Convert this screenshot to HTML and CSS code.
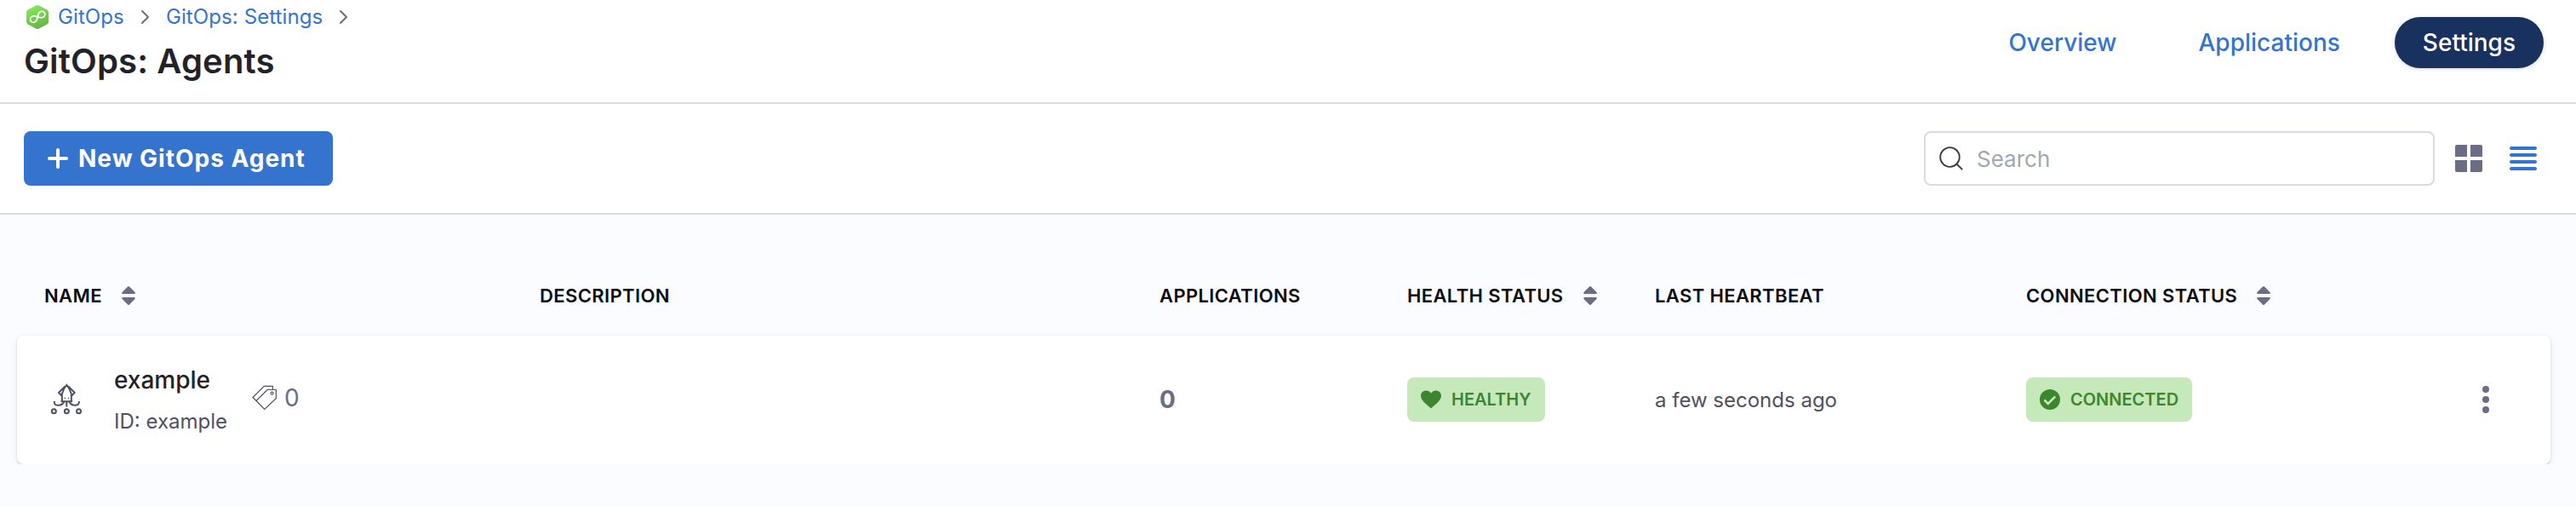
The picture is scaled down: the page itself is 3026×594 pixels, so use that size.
FILE: index.html
```html
<!DOCTYPE html>
<html lang="en">
<head>
<meta charset="utf-8">
<title>GitOps: Agents</title>
<link rel="stylesheet" href="styles.css">
</head>
<body>
<header class="header">
  <div class="heading">
    <nav class="crumbs">
      <svg class="logo" width="28" height="30" viewBox="0 0 28 30"><defs><linearGradient id="g" x1="0.3" y1="0" x2="0.7" y2="1"><stop offset="0" stop-color="#86ea55"/><stop offset="1" stop-color="#62b344"/></linearGradient></defs><path d="M12.2 1.4q1.8-1 3.6 0l9.6 5.2q1.600 1 1.600 2.700v11.400q0 1.700-1.600 2.700l-9.600 5.200q-1.800 1-3.600 0l-9.600-5.200q-1.600-1-1.600-2.700V9.300q0-1.700 1.600-2.700z" fill="url(#g)"/><path transform="translate(14.200 14.800) rotate(-30)" d="M0 0C2-2.500 3.500-3.600 5.800-3.600a3.600 3.600 0 0 1 0 7.200C3.500 3.600 2 2.500 0 0C-2-2.500-3.500-3.600-5.800-3.600a3.600 3.600 0 0 0 0 7.200C-3.500 3.600-2 2.500 0 0z" fill="none" stroke="#fff" stroke-width="1.700"/></svg>
      <a class="crumb">GitOps</a>
      <svg class="chev" width="12" height="18" viewBox="0 0 12 18"><path d="M2 2l7 7-7 7"/></svg>
      <a class="crumb">GitOps: Settings</a>
      <svg class="chev" width="12" height="18" viewBox="0 0 12 18"><path d="M2 2l7 7-7 7"/></svg>
    </nav>
    <h1 class="title">GitOps: Agents</h1>
  </div>
  <nav class="tabs">
    <a class="tab">Overview</a>
    <a class="tab">Applications</a>
    <a class="tab active">Settings</a>
  </nav>
</header>
<section class="toolbar">
  <button class="new"><svg width="24" height="24" viewBox="0 0 24 24"><path d="M12 2v20M2 12h20" stroke="#fff" stroke-width="4" stroke-linecap="round"/></svg><span>New GitOps Agent</span></button>
  <div class="tools">
    <div class="search"><svg width="28" height="28" viewBox="0 0 28 28"><circle cx="12.500" cy="12.500" r="11.300"/><path d="M20.500 20.500l6.200 6.200"/></svg><span>Search</span></div>
    <svg class="gridicon" width="32" height="32" viewBox="0 0 32 32" fill="#6b6d85"><path d="M2 0h12v14H0V2q0-2 2-2zM18 0h12q2 0 2 2v12H18zM0 18h14v14H2q-2 0-2-2zM18 18h14v12q0 2-2 2H18z"/></svg>
    <svg width="32" height="28" viewBox="0 0 32 28" stroke="#3474ce" stroke-width="4" stroke-linecap="round"><path d="M2 2h28M2 10h28M2 18h28M2 26h28"/></svg>
  </div>
</section>
<main class="content">
  <div class="cols head">
    <div>NAME<svg class="sort" width="16" height="22" viewBox="0 0 16 22"><path d="M7 .5q1-1 2 0l6.500 6.600q.9 1.900-1 1.900h-13q-1.900 0-1-1.900zM7 21.500q1 1 2 0l6.500-6.600q.9-1.900-1-1.900h-13q-1.900 0-1 1.900z"/></svg></div>
    <div>DESCRIPTION</div>
    <div>APPLICATIONS</div>
    <div>HEALTH STATUS<svg class="sort" width="16" height="22" viewBox="0 0 16 22"><path d="M7 .5q1-1 2 0l6.500 6.600q.9 1.900-1 1.900h-13q-1.900 0-1-1.900zM7 21.500q1 1 2 0l6.500-6.600q.9-1.900-1-1.900h-13q-1.900 0-1 1.900z"/></svg></div>
    <div>LAST HEARTBEAT</div>
    <div>CONNECTION STATUS<svg class="sort" width="16" height="22" viewBox="0 0 16 22"><path d="M7 .5q1-1 2 0l6.500 6.600q.9 1.900-1 1.900h-13q-1.900 0-1-1.900zM7 21.500q1 1 2 0l6.500-6.600q.9-1.900-1-1.900h-13q-1.900 0-1 1.900z"/></svg></div>
    <div></div>
  </div>
  <div class="cols row">
    <div class="name">
      <svg class="squid" width="38" height="38" viewBox="0 0 38 38" fill="none" stroke="#4f5162" stroke-width="2"><path d="M13.800 21.300V12.500Q15.500 6 19.300 1.800q3.800 4.200 5.500 10.700v8.800zM12.500 21.300h13.600M17.500 3.500L10 10.800l3.800 4.200M21.100 3.500l7.500 7.300-3.800 4.200M4.800 21v1.500c.4 4 8.400 5.300 11.500-1M33.800 21v1.500c-.4 4-8.400 5.300-11.500-1M19.300 22v5.500"/><circle cx="4.300" cy="32.700" r="2.500"/><circle cx="19.300" cy="32.700" r="2.500"/><circle cx="33.500" cy="32.700" r="2.500"/><path d="M16.500 17.500h1.300M20.800 17.500h1.300" stroke-width="1.500"/></svg>
      <div class="ident"><div class="agent">example</div><div class="id">ID: example</div></div>
      <div class="tags"><svg width="30" height="30" viewBox="0 0 30 30" fill="none" stroke="#4f5162" stroke-width="1.200"><path d="M5 18.500L18 5.500h10.300v10.300L14.700 28.500zM5 18.500L1 14.500 14.200 1.400H24.300v4"/><circle cx="23.500" cy="9.700" r="1.500"/></svg><span>0</span></div>
    </div>
    <div></div>
    <div class="count">0</div>
    <div><span class="badge healthy"><svg width="24" height="22" viewBox="0 0 24 22"><path d="M12 21.500C8.500 18 0 12.500 0 6.500 0 .2 8.800-1.800 12 3.800 15.200-1.800 24 .2 24 6.500c0 6-8.500 11.500-12 15z"/></svg>HEALTHY</span></div>
    <div class="beat">a few seconds ago</div>
    <div><span class="badge connected"><svg width="24" height="24" viewBox="0 0 24 24"><circle cx="12" cy="12" r="12"/><path d="M5.500 12.500l4.300 4.300 8.500-8.500" fill="none" stroke="#c6e9bb" stroke-width="2.600"/></svg>CONNECTED</span></div>
    <div class="more"><svg width="8" height="32" viewBox="0 0 8 32" fill="#6b6d85"><circle cx="4" cy="4" r="4"/><circle cx="4" cy="16" r="4"/><circle cx="4" cy="28" r="4"/></svg></div>
  </div>
</main>
</body>
</html>
```
FILE: styles.css
```css
* { box-sizing: border-box; }
body { margin: 0; background: #fbfcff; font-family: Inter, sans-serif; color: #22222a; }
svg { display: block; flex: none; }
.header { height: 122px; background: #fff; border-bottom: 2px solid #d9dae5; display: flex; justify-content: space-between; padding: 0 38px 0 28px; }
.crumbs { display: flex; align-items: center; height: 40px; padding-left: 2px; font-size: 24px; line-height: 40px; color: #3474ce; letter-spacing: .1px; }
.logo { margin-right: 10px; }
.chev { margin: 0 18px 0 19px; fill: none; stroke: #6b6d85; stroke-width: 2; stroke-linecap: round; stroke-linejoin: round; }
.title { margin: 8px 0 0; font-size: 40px; line-height: 48px; font-weight: 600; letter-spacing: .15px; }
.tabs { display: flex; align-items: center; height: 60px; margin-top: 20px; gap: 32px; font-size: 28px; font-weight: 500; color: #3474ce; }
.tab { line-height: 60px; padding: 0 32px; border-radius: 30px; }
.tab.active { padding: 0 33px; background: #18315f; color: #fff; box-shadow: 0 1px 4px rgba(40,41,61,.2); }
.toolbar { height: 130px; background: #fff; border-bottom: 2px solid #d9dae5; display: flex; justify-content: space-between; align-items: center; padding: 0 46px 0 28px; }
.new { display: flex; align-items: center; width: 363px; height: 64px; border: 0; border-radius: 8px; background: #3474ce; color: #fff; padding: 0 0 0 28px; gap: 12px; font: 700 28px/64px Inter, sans-serif; letter-spacing: 1px; white-space: nowrap; }
.tools { display: flex; align-items: center; }
.search { width: 600px; height: 64px; border: 2px solid #d9dae5; border-radius: 8px; display: flex; align-items: center; gap: 16px; padding-left: 16px; font-size: 26px; color: #a0a8b2; }
.search svg { fill: none; stroke: #383946; stroke-width: 1.8; stroke-linecap: round; }
.gridicon { margin: 0 32px 0 24px; }
.content { padding: 66px 30px 0 20px; }
.cols { display: grid; grid-template-columns: 582px 728px 291px 291px 436px 500px 1fr; align-items: center; padding-left: 32px; }
.head { height: 58px; font-size: 22px; font-weight: 600; color: #0b0b0d; letter-spacing: .38px; }
.head div { display: flex; align-items: center; white-space: nowrap; }
.sort { margin-left: 23px; fill: #6b6d85; }
.row { height: 151px; margin-top: 18px; padding-bottom: 1px; background: #fff; border-radius: 8px; box-shadow: 0 1px 2px rgba(40,41,61,.18), 0 2px 8px rgba(96,97,112,.12); }
.name { display: flex; align-items: center; }
.squid { margin: 0 37px 0 7px; }
.ident { width: 162px; }
.agent { font-size: 28px; line-height: 34px; font-weight: 500; }
.id { font-size: 24px; line-height: 30px; margin-top: 17px; color: #4f5162; }
.tags { display: flex; align-items: center; gap: 8px; padding-bottom: 4px; font-size: 28px; line-height: 34px; color: #6b6d85; }
.count { font-size: 28px; font-weight: 700; color: #6b6d85; }
.badge { display: inline-flex; align-items: center; vertical-align: top; height: 52px; padding-left: 16px; border-radius: 8px; background: #c6e9bb; color: #3d8630; fill: #3d8630; font-size: 20px; font-weight: 600; }
.badge svg { margin-right: 12px; }
.healthy { width: 162px; }
.connected { width: 195px; }
.beat { font-size: 24px; color: #4f5162; }
.more { padding-left: 36px; }
```
